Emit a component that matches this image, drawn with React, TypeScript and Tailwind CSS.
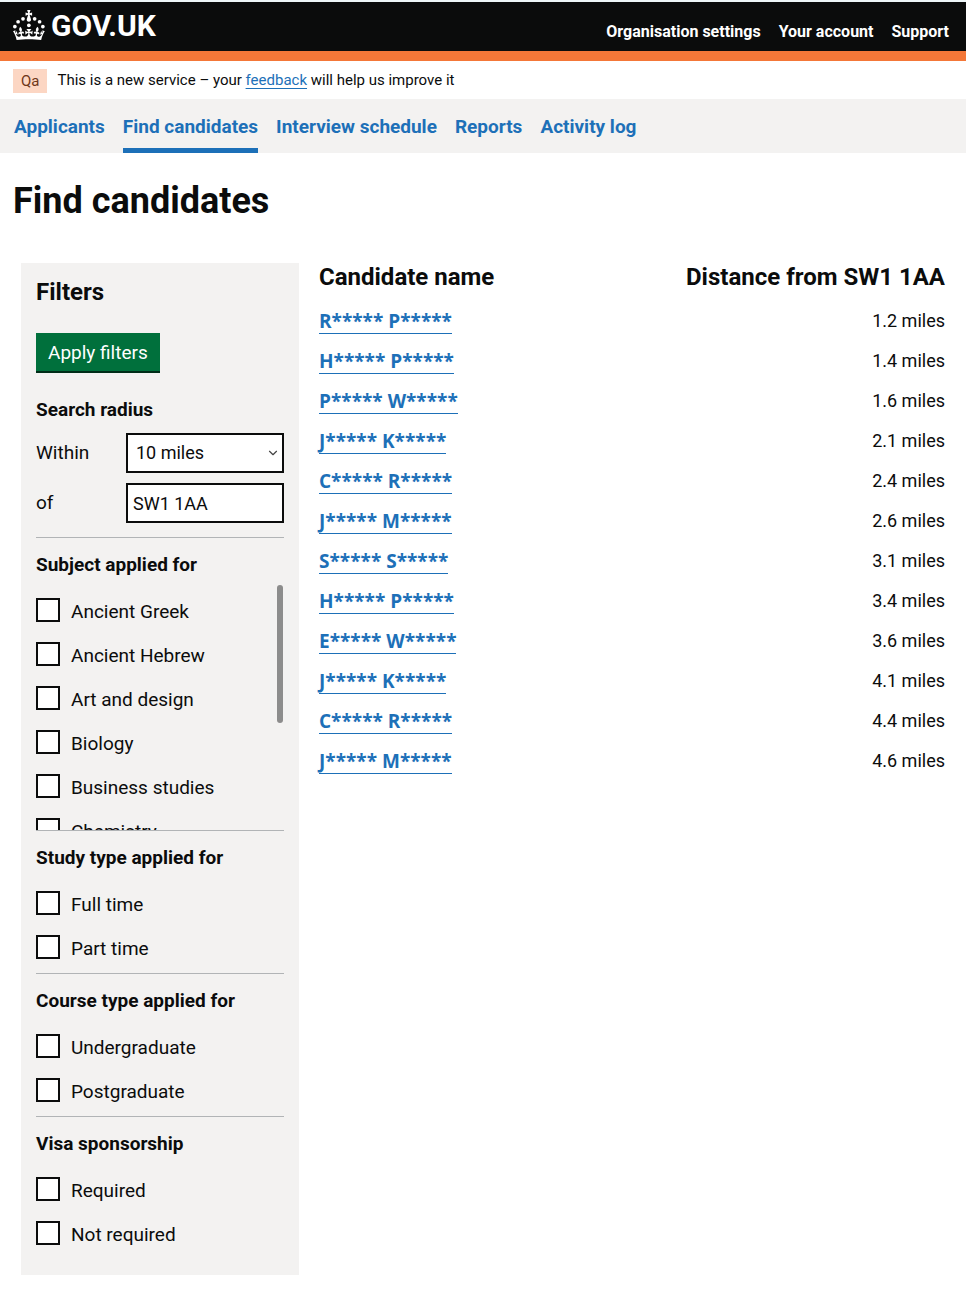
import React from "react";
import { ChevronDown } from "lucide-react";

const accountLinks = ["Organisation settings", "Your account", "Support"];

const sections = ["Applicants", "Find candidates", "Interview schedule", "Reports", "Activity log"];

const candidates = [
  { name: "R***** P*****", distance: "1.2 miles" },
  { name: "H***** P*****", distance: "1.4 miles" },
  { name: "P***** W*****", distance: "1.6 miles" },
  { name: "J***** K*****", distance: "2.1 miles" },
  { name: "C***** R*****", distance: "2.4 miles" },
  { name: "J***** M*****", distance: "2.6 miles" },
  { name: "S***** S*****", distance: "3.1 miles" },
  { name: "H***** P*****", distance: "3.4 miles" },
  { name: "E***** W*****", distance: "3.6 miles" },
  { name: "J***** K*****", distance: "4.1 miles" },
  { name: "C***** R*****", distance: "4.4 miles" },
  { name: "J***** M*****", distance: "4.6 miles" },
];

function Crown() {
  return (
    <svg viewBox="0 0 64 60" className="h-[30px] w-8 shrink-0" fill="currentColor" aria-hidden="true">
      <circle cx="20" cy="17.6" r="3.7" />
      <circle cx="10.2" cy="23.5" r="3.7" />
      <circle cx="3.7" cy="33.2" r="3.7" />
      <circle cx="31.7" cy="30.6" r="3.7" />
      <circle cx="43.3" cy="17.6" r="3.7" />
      <circle cx="53.2" cy="23.5" r="3.7" />
      <circle cx="59.7" cy="33.2" r="3.7" />
      <path d="M33.1,9.8c.2-.1.3-.3.5-.5l4.6,2.4v-6.8l-4.6,1.5c-.1-.2-.3-.3-.5-.5l1.9-5.9h-6.7l1.9,5.9c-.2.1-.3.3-.5.5l-4.6-1.5v6.8l4.6-2.4c.1.2.3.3.5.5l-2.6,8c-.9,2.8,1.2,5.7,4.1,5.7h0c3,0,5.1-2.9,4.1-5.7l-2.6-8ZM37,37.9s-3.4,3.8-4.1,6.1c2.2,0,4.2-.5,6.4-2.8l-.7,8.5c-2-2.8-4.4-4.1-5.7-3.8.1,3.1.5,6.7,5.8,7.2,3.7.3,6.7-1.5,7-3.8.4-2.6-2-4.3-3.7-1.6-1.4-4.5,2.4-6.1,4.9-3.2-1.9-4.5-1.8-7.7,2.4-10.9,3,4,2.6,7.3-1.2,11.1,2.4-1.3,6.2,0,4,4.6-1.2-2.8-3.7-2.2-4.2.2-.3,1.7.7,3.7,3,4.2,1.9.3,4.7-.9,7-5.9-1.3,0-2.4.7-3.9,1.7l2.4-8c.6,2.3,1.4,3.7,2.2,4.5.6-1.6.5-2.8,0-5.3l5,1.8c-2.6,3.6-5.2,8.7-7.3,17.5-7.4-1.1-15.7-1.7-24.5-1.7h0c-8.8,0-17.1.6-24.5,1.7-2.1-8.9-4.7-13.9-7.3-17.5l5-1.8c-.5,2.5-.6,3.7,0,5.3.8-.8,1.6-2.3,2.2-4.5l2.4,8c-1.5-1-2.6-1.7-3.9-1.7,2.3,5,5.2,6.2,7,5.9,2.3-.4,3.3-2.4,3-4.2-.5-2.4-3-3.1-4.2-.2-2.2-4.6,1.6-6,4-4.6-3.7-3.7-4.2-7.1-1.2-11.1,4.2,3.2,4.3,6.4,2.4,10.9,2.5-2.8,6.3-1.3,4.9,3.2-1.8-2.7-4.1-1-3.7,1.6.3,2.3,3.3,4.1,7,3.8,5.4-.5,5.7-4.2,5.8-7.2-1.3-.2-3.7,1-5.7,3.8l-.7-8.5c2.2,2.3,4.2,2.7,6.4,2.8-.7-2.3-4.1-6.1-4.1-6.1h10.6Z" />
    </svg>
  );
}

function Checkbox({ label }: { label: string }) {
  return (
    <label className="flex h-11 items-center gap-[11px] text-[19px] text-[#0b0c0c]">
      <input type="checkbox" className="size-6 shrink-0 appearance-none border-2 border-[#0b0c0c] bg-white checked:bg-[#0b0c0c]" />
      <span className="pt-[3px] leading-6">{label}</span>
    </label>
  );
}

function FilterGroup({ title, options }: { title: string; options: string[] }) {
  return (
    <fieldset className="border-t border-[#b1b4b6] pt-[15px] pb-1">
      <legend className="float-left w-full text-[19px] leading-6 font-bold">{title}</legend>
      <div className="clear-both pt-[11px]">
        {options.map((option) => (
          <Checkbox key={option} label={option} />
        ))}
      </div>
    </fieldset>
  );
}

function Filters() {
  return (
    <form className="w-[278px] shrink-0 bg-[#f3f2f1] px-[15px] pt-[15px] pb-4" onSubmit={(event) => event.preventDefault()}>
      <h2 className="text-2xl leading-7 font-bold">Filters</h2>
      <button type="submit" className="mt-[27px] flex h-10 items-center border-b-2 border-[#002d18] bg-[#00703c] px-3 pt-[2px] text-[19px] text-white">
        Apply filters
      </button>

      <h3 className="mt-[25px] text-[19px] leading-6 font-bold">Search radius</h3>
      <div className="mt-[11px] grid grid-cols-[90px_1fr] items-center gap-y-[10px] pb-[14px] text-lg">
        <label htmlFor="radius" className="text-[19px]">
          Within
        </label>
        <div className="grid items-center">
          <select id="radius" defaultValue="10 miles" className="col-start-1 row-start-1 h-10 w-full appearance-none border-2 border-[#0b0c0c] bg-white px-2">
            <option>10 miles</option>
          </select>
          <ChevronDown className="pointer-events-none col-start-1 row-start-1 mr-1 size-[14px] justify-self-end text-[#444444]" strokeWidth={2} aria-hidden="true" />
        </div>
        <label htmlFor="postcode" className="text-[19px]">
          of
        </label>
        <input id="postcode" type="text" defaultValue="SW1 1AA" className="h-10 w-full border-2 border-[#0b0c0c] bg-white px-[5px]" />
      </div>

      <fieldset className="border-t border-[#b1b4b6] pt-[15px]">
        <legend className="float-left w-full text-[19px] leading-6 font-bold">Subject applied for</legend>
        <div className="relative clear-both pt-[5px]">
          <div className="h-[248px] overflow-y-auto pt-[6px] [scrollbar-width:none]">
            {["Ancient Greek", "Ancient Hebrew", "Art and design", "Biology", "Business studies", "Chemistry"].map((subject) => (
              <Checkbox key={subject} label={subject} />
            ))}
          </div>
          <div className="absolute top-2 right-px h-[138px] w-[6px] rounded-full bg-[#8c8c8c]" />
        </div>
      </fieldset>

      <FilterGroup title="Study type applied for" options={["Full time", "Part time"]} />
      <FilterGroup title="Course type applied for" options={["Undergraduate", "Postgraduate"]} />
      <FilterGroup title="Visa sponsorship" options={["Required", "Not required"]} />
    </form>
  );
}

export default function App() {
  return (
    <div className="min-h-screen border-t-2 border-[#eef6f8] bg-white pb-6 font-['Roboto',sans-serif] text-[#0b0c0c]">
      <header className="flex h-[59px] items-center justify-between border-b-[10px] border-[#f47738] bg-[#0b0c0c] pr-[17px] pl-[13px] text-white">
        <a href="#" className="flex items-center gap-[6px] pb-1 text-3xl font-bold">
          <Crown />
          <span className="pt-[3px] leading-8">GOV.UK</span>
        </a>
        <nav className="flex gap-[18px] pt-[10px] text-base leading-5 font-bold">
          {accountLinks.map((link) => (
            <a key={link} href="#">
              {link}
            </a>
          ))}
        </nav>
      </header>

      <div className="flex h-[38px] items-center gap-[10px] px-[13px] pt-px text-[15px]">
        <strong className="bg-[#fcd6c3] px-2 leading-6 font-normal text-[#6e3619]">Qa</strong>
        <p>
          This is a new service – your{" "}
          <a href="#" className="text-[#1d70b8] underline underline-offset-3">
            feedback
          </a>{" "}
          will help us improve it
        </p>
      </div>

      <nav className="flex h-[54px] gap-[18px] bg-[#f3f2f1] px-[14px] text-[19px] font-bold text-[#1d70b8]">
        {sections.map((section) => (
          <a
            key={section}
            href="#"
            aria-current={section === "Find candidates" ? "page" : undefined}
            className="border-b-[5px] border-transparent pt-[15px] leading-[26px] aria-[current=page]:border-[#1d70b8]"
          >
            {section}
          </a>
        ))}
      </nav>

      <main>
        <h1 className="px-[13px] pt-7 text-4xl leading-10 font-bold">Find candidates</h1>
        <div className="mt-[42px] flex items-start gap-5 px-[21px]">
          <Filters />
          <table className="min-w-0 flex-1 border-collapse text-lg">
            <thead>
              <tr className="text-2xl leading-7">
                <th scope="col" className="pb-[10px] text-left font-bold">
                  Candidate name
                </th>
                <th scope="col" className="pb-[10px] text-right font-bold">
                  Distance from SW1 1AA
                </th>
              </tr>
            </thead>
            <tbody>
              {candidates.map((candidate, index) => (
                <tr key={index} className="h-10 leading-6">
                  <td>
                    <a href="#" className="block w-fit border-b border-[#1d70b8] font-['Open_Sans',sans-serif] text-[19px] leading-6 font-bold text-[#1d70b8]">
                      {candidate.name}
                    </a>
                  </td>
                  <td className="text-right">{candidate.distance}</td>
                </tr>
              ))}
            </tbody>
          </table>
        </div>
      </main>
    </div>
  );
}
